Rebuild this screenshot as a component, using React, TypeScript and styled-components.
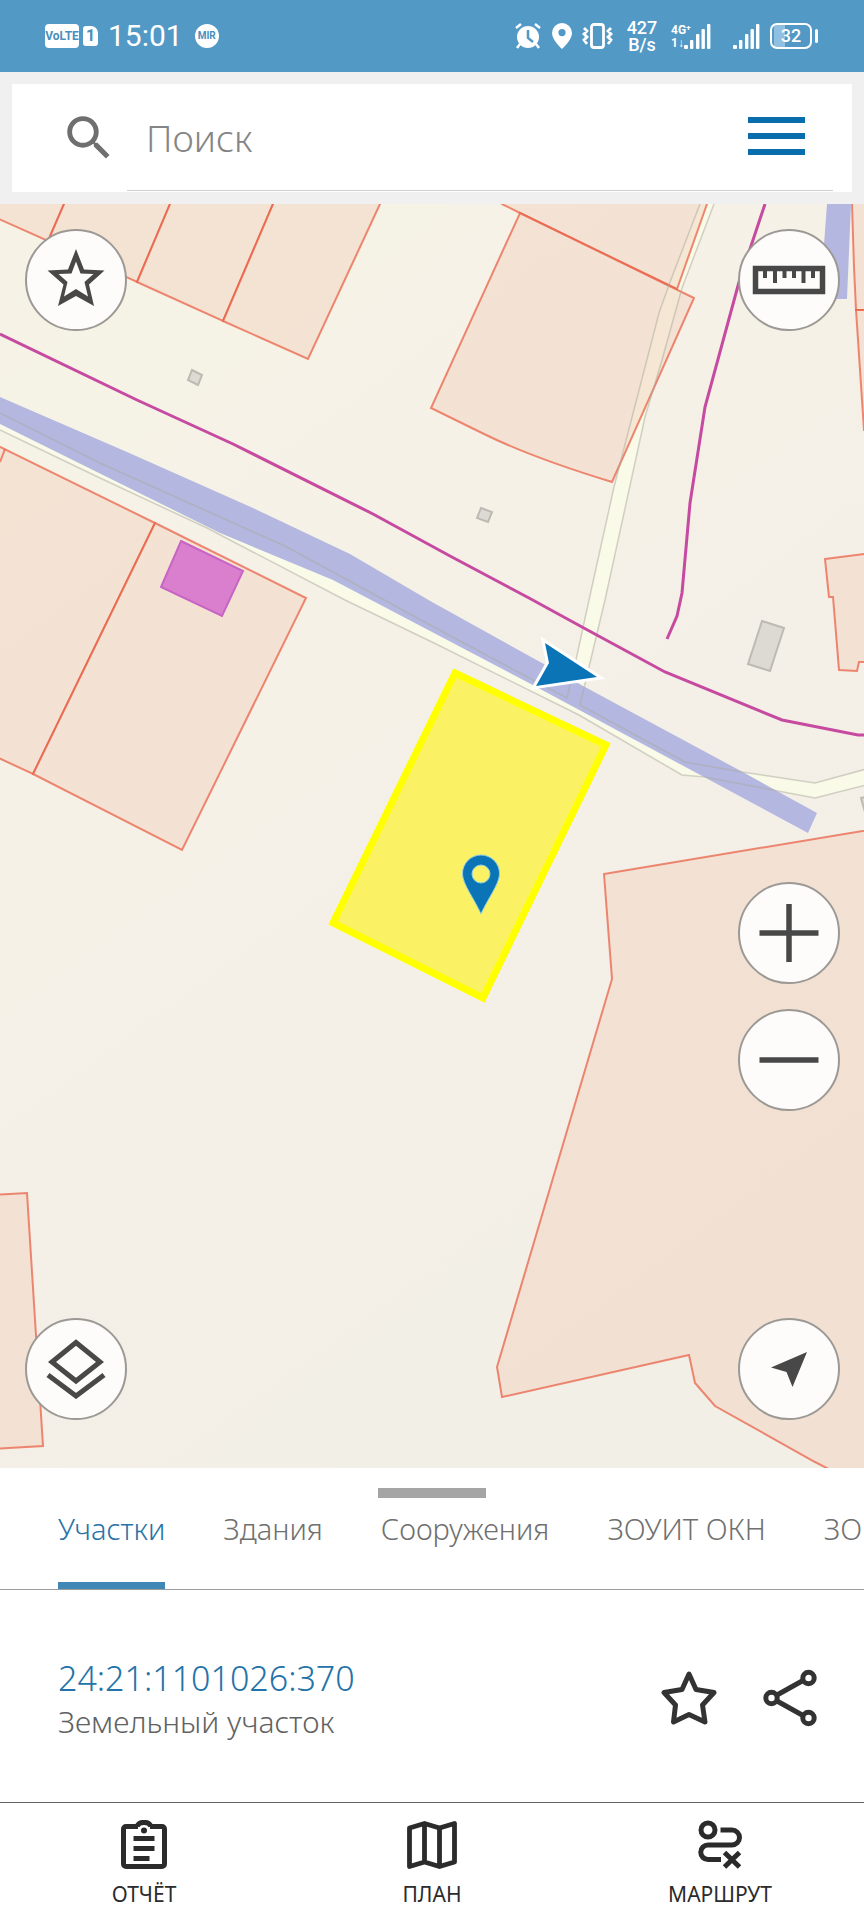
import React from 'react';
import styled, { createGlobalStyle, css } from 'styled-components';

const Global = createGlobalStyle`
  *, *::before, *::after { box-sizing: border-box; }
  body { margin: 0; background: #fff; font-family: "Noto Sans", "Open Sans", sans-serif; }
  button { font: inherit; color: inherit; background: none; border: 0; padding: 0; cursor: pointer; }
  svg { display: block; flex: none; }
`;

const Screen = styled.div`
  display: flex;
  flex-direction: column;
  min-height: 100vh;
  overflow: hidden;
`;

/* ---------- status bar ---------- */

const StatusBar = styled.header`
  display: flex;
  align-items: center;
  justify-content: space-between;
  height: 72px;
  padding: 0 46px 0 45px;
  background: #5299c6;
  color: #fff;
`;

const StatusGroup = styled.div<{ $gap: number }>`
  display: flex;
  align-items: center;
  gap: ${(p) => p.$gap}px;
`;

const Badge = styled.span<{ $width: number; $size: number; $round?: boolean }>`
  display: flex;
  align-items: center;
  justify-content: center;
  width: ${(p) => p.$width}px;
  height: 24px;
  border-radius: ${(p) => (p.$round ? '50%' : '4px')};
  background: #fff;
  color: #4a8fbd;
  font: 700 ${(p) => p.$size}px/24px Roboto, sans-serif;
`;

const SimBadge = styled(Badge)`
  height: 20px;
  border-radius: 3px 7px 3px 3px;
`;

const Clock = styled.time`
  margin: 0 8px 0 6px;
  font: 400 30px/40px Roboto, sans-serif;
`;

const Speed = styled.span`
  width: 34px;
  margin-left: 2px;
  font: 500 18px/17px Roboto, sans-serif;
  text-align: center;
`;

const Network = styled.div`
  display: flex;
  align-items: flex-end;
  margin: 0 12px 0 2px;
`;

const NetworkType = styled.span`
  display: flex;
  flex-direction: column;
  align-self: stretch;
  justify-content: space-between;
  width: 13px;
  font: 700 12px/12px Roboto, sans-serif;
  white-space: nowrap;
`;

const Battery = styled.span`
  display: flex;
  align-items: center;
  gap: 3px;

  &::after {
    content: '';
    width: 3px;
    height: 14px;
    border-radius: 2px;
    background: #fff;
  }
`;

const BatteryBody = styled.span`
  width: 42px;
  height: 26px;
  border: 2px solid #fff;
  border-radius: 7px;
  background: linear-gradient(90deg, transparent 2px, #8fc0e2 2px, #8fc0e2 13px, transparent 13px);
  font: 500 18px/22px Roboto, sans-serif;
  text-align: center;
`;

/* ---------- search ---------- */

const SearchArea = styled.form`
  padding: 12px;
  background: #f0f0f1;
`;

const SearchCard = styled.div`
  display: flex;
  align-items: center;
  gap: 9px;
  height: 108px;
  padding: 0 19px 1px 48px;
  background: #fff;
`;

const SearchField = styled.div`
  display: flex;
  flex: 1;
  align-items: center;
  align-self: stretch;
  min-width: 0;
  padding: 0 28px 0 19px;
  border-bottom: 1px solid #cfcfcf;
`;

const SearchInput = styled.input`
  flex: 1;
  min-width: 0;
  border: 0;
  outline: 0;
  padding: 2px 0 0;
  background: none;
  font: 300 37px/48px "Noto Sans", sans-serif;
  color: #444;

  &::placeholder { color: #858585; opacity: 1; }
`;

const MenuButton = styled.button`
  display: flex;
  flex-direction: column;
  gap: 10px;
  width: 57px;
  padding-bottom: 2px;

  span { height: 6px; background: #0a6dab; }
`;

/* ---------- map ---------- */

const MapArea = styled.main`
  position: relative;
  display: flex;
  flex: 1;
  justify-content: space-between;
  min-height: 800px;
  padding: 25px 24px 48px 25px;
  background: #f4f0e7;
  overflow: hidden;
`;

const MapDrawing = styled.svg`
  position: absolute;
  inset: 0;
  width: 100%;
  height: 100%;
`;

const ControlColumn = styled.div`
  position: relative;
  display: flex;
  flex-direction: column;
  justify-content: space-between;
`;

const ZoomGroup = styled.div`
  display: flex;
  flex-direction: column;
  gap: 25px;
  margin: auto 0 207px;
`;

const RoundButton = styled.button`
  display: flex;
  align-items: center;
  justify-content: center;
  width: 102px;
  height: 102px;
  border: 2px solid #9c9995;
  border-radius: 50%;
  background: #fdfcfb;
  color: #484848;
`;

/* ---------- sheet ---------- */

const Sheet = styled.section`
  padding-top: 20px;
  background: #fff;
`;

const Handle = styled.div`
  width: 108px;
  height: 10px;
  margin: 0 auto;
  background: #a5a5a5;
`;

const Tabs = styled.nav`
  display: flex;
  gap: 58px;
  height: 92px;
  padding-left: 58px;
  border-bottom: 1px solid #9c9c9c;
  overflow: hidden;
`;

const Tab = styled.button<{ $active?: boolean }>`
  flex: none;
  padding: 0 0 22px;
  border-bottom: 7px solid transparent;
  font-size: 29px;
  font-weight: 300;
  line-height: 40px;
  color: #707070;
  white-space: nowrap;

  ${(p) =>
    p.$active &&
    css`
      color: #2873a5;
      border-color: #4187b5;
    `}
`;

const ObjectRow = styled.article`
  display: flex;
  align-items: center;
  justify-content: space-between;
  height: 212px;
  padding: 0 47px 0 58px;
`;

const ObjectText = styled.div`
  display: flex;
  flex-direction: column;
  padding-top: 5px;
`;

const ObjectLink = styled.a`
  font-size: 34px;
  font-weight: 300;
  line-height: 46px;
  color: #2473a8;
  text-decoration: none;
`;

const ObjectKind = styled.span`
  font-size: 30px;
  font-weight: 300;
  line-height: 42px;
  color: #626262;
`;

const Actions = styled.div`
  display: flex;
  align-items: center;
  gap: 46px;
  padding-top: 4px;
  color: #333;
`;

const BottomBar = styled.nav`
  display: grid;
  grid-template-columns: repeat(3, 1fr);
  height: 118px;
  border-top: 1px solid #636363;
  background: #fff;
`;

const BottomItem = styled.button`
  display: flex;
  flex-direction: column;
  align-items: center;
  gap: 9px;
  padding-top: 17px;
  font-size: 21px;
  line-height: 30px;
  color: #2b2b2b;
`;

/* ---------- drawings ---------- */

const AlarmIcon = () => (
  <svg width="28" height="26" viewBox="0 0 28 26" fill="#fff">
    <circle cx="14" cy="14" r="11" />
    <path d="M2 5 7 1M26 5 21 1M6 21 3 25M22 21l3 4" stroke="#fff" strokeWidth="2.5" />
    <path d="M14 7v8l5 4" stroke="#5299c6" strokeWidth="2.5" fill="none" />
  </svg>
);

const PlaceIcon = () => (
  <svg width="20" height="26" viewBox="0 0 20 26">
    <path fillRule="evenodd" fill="#fff" d="M10 0a10 10 0 0 1 10 10c0 7-10 16-10 16S0 17 0 10A10 10 0 0 1 10 0Zm0 6a3.6 3.6 0 1 0 0 7.2a3.6 3.6 0 0 0 0-7.2Z" />
  </svg>
);

const VibrateIcon = () => (
  <svg width="31" height="26" viewBox="0 0 31 26" fill="none" stroke="#fff">
    <rect x="9.5" y="1.5" width="12" height="23" rx="2.5" strokeWidth="2.8" />
    <path d="M2 5l3 3-3 3 3 3-3 3 3 4M29 5l-3 3 3 3-3 3 3 3-3 4" strokeWidth="2.8" />
  </svg>
);

const SignalIcon = () => (
  <svg width="27" height="25" viewBox="0 0 27 25" fill="#fff">
    <rect x="0" y="21" width="4" height="4" rx="1" />
    <rect x="6" y="16" width="3.4" height="9" rx="1" />
    <rect x="12" y="10" width="3.4" height="15" rx="1" />
    <rect x="17.5" y="5" width="3.4" height="20" rx="1" />
    <rect x="23" y="0" width="3.4" height="25" rx="1" />
  </svg>
);

const SearchIcon = () => (
  <svg width="58" height="58" viewBox="0 0 24 24" fill="#6f6f6f" aria-hidden="true">
    <path d="M15.5 14h-.79l-.28-.27A6.471 6.471 0 0 0 16 9.5 6.5 6.5 0 1 0 9.5 16c1.61 0 3.09-.59 4.23-1.57l.27.28v.79l5 4.99L20.49 19l-4.99-5zm-6 0C7.01 14 5 11.99 5 9.5S7.01 5 9.5 5 14 7.01 14 9.5 11.99 14 9.5 14z" />
  </svg>
);

const SharpStarIcon = () => (
  <svg width="58" height="62" viewBox="0 0 58 62" fill="currentColor">
    <path
      fillRule="evenodd"
      d="M29 0 37 20.5 57.500 21.500 42 35.500 47 57 29 47 11 57 16.500 35.500 .5 21.500 21 20.500ZM29 12.500 24.500 24.500 11.500 25 20.500 33 17 47.500 29 40 41 47.500 37.500 33 46.500 25 33.500 24.500Z"
    />
  </svg>
);

const RulerIcon = () => (
  <svg width="74" height="30" viewBox="0 0 74 30" fill="none" stroke="currentColor">
    <rect x="3.5" y="3.5" width="67" height="23" strokeWidth="5.5" />
    <path d="M13 5v8M23 5v13M32.5 5v8M42 5v8M51.5 5v13M61 5v8" strokeWidth="4" />
  </svg>
);

const PlusIcon = () => (
  <svg width="60" height="60" viewBox="0 0 60 60" stroke="currentColor" strokeWidth="5.5">
    <path d="M.5 30h59M30 1v58" />
  </svg>
);

const MinusIcon = () => (
  <svg width="60" height="60" viewBox="0 0 60 60" stroke="currentColor" strokeWidth="5.5">
    <path d="M.5 30h59" />
  </svg>
);

const LayersIcon = () => (
  <svg width="60" height="60" viewBox="0 0 60 60" fill="none" stroke="currentColor" strokeWidth="5">
    <path d="M30 3.500 54 23 30 42 6 23Z" />
    <path d="M2 36 30 57 58 36" />
  </svg>
);

const LocateIcon = () => (
  <svg width="36" height="36" viewBox="0 0 36 36" fill="currentColor">
    <path d="M36 1 21.5 36 15.5 21 0 16.500Z" />
  </svg>
);

const StarIcon = () => (
  <svg width="56" height="54" viewBox="0 0 56 54" fill="none" stroke="currentColor" strokeWidth="5" strokeLinejoin="round">
    <path d="M28 3 35 18.5 53 21.5 41.5 34 44 51 28 43.5 12.500 51 14.500 34 3 21.500 21 18.500Z" />
  </svg>
);

const ShareIcon = () => (
  <svg width="54" height="58" viewBox="0 0 54 58" fill="none" stroke="currentColor" strokeWidth="5">
    <circle cx="8.500" cy="29" r="5.700" />
    <circle cx="45.500" cy="9" r="5.700" />
    <circle cx="45.500" cy="49" r="5.700" />
    <path d="M14 26 40 11.500M14 32 40 46.500" />
  </svg>
);

const ReportIcon = () => (
  <svg width="46" height="50" viewBox="0 0 46 50" fill="none" stroke="currentColor" strokeWidth="5">
    <path d="M17 6.500H5a2.500 2.500 0 0 0-2.500 2.500V44A2.500 2.500 0 0 0 5 46.500H41A2.500 2.500 0 0 0 43.500 44V9A2.500 2.500 0 0 0 41 6.500H29" />
    <path d="M16 6.500C18 1 28 1 30 6.500" />
    <circle cx="23" cy="10.500" r="3" fill="currentColor" stroke="none" />
    <path d="M12.500 18.500h21M12.500 28.500h21M12.500 38.500h16" />
  </svg>
);

const PlanIcon = () => (
  <svg width="50" height="50" viewBox="0 0 50 50" fill="none" stroke="currentColor" strokeWidth="4.800" strokeLinejoin="round">
    <path d="M2.500 8 17.500 3.500 32.500 8 47.500 3.500V42L32.500 46.500 17.500 42 2.500 46.500ZM17.500 3.500V42M32.500 8v38.500" />
  </svg>
);

const RouteIcon = () => (
  <svg width="44" height="50" viewBox="0 0 44 50" fill="none" stroke="currentColor" strokeWidth="5">
    <circle cx="10" cy="10" r="7" />
    <path d="M22.500 10H34a7.500 7.500 0 0 1 0 15H10a7 7 0 0 0 0 14.500H23" />
    <path d="M26.500 32.500 41.500 47M41.500 32.500 26.500 47" />
  </svg>
);

const parcels = [
  'M-10 215 48 241 64 204 80 150 -10 150Z',
  'M48 241 137 282 170 204 190 150H80L64 204Z',
  'M137 282 223 321 273 204 290 150H190L170 204Z',
  'M223 321 308 359 380 204 405 150H290L273 204Z',
  'M502 204 520 213 677 289 707 204 720 150H420Z',
  'M520 213 694 298 612 482Q530 457 482 433L431 408Z',
  'M852 150V204L854 267 856 310H880V150Z',
  'M856 310 864 430H880V310Z',
  'M825 559 880 552V662H859L857 671 839 670 833 597H829Z',
  'M-10 442 155 523 33 774 -10 754Z',
  'M155 523 306 598 182 850 33 774Z',
  'M604 874 880 828V1480H850L815 1462 715 1406 695 1383 689 1355 502 1397 497 1367 612 979Z',
  'M-10 1195 27 1193 43 1446 -10 1449Z',
];

const CadastralMap = () => (
  <MapDrawing viewBox="0 204 864 1264" preserveAspectRatio="xMidYMid slice" aria-label="Карта участков">
    <defs>
      <linearGradient id="land" x1="0" y1="0" x2="0.5" y2="1">
        <stop offset="0" stopColor="#f6f3e6" />
        <stop offset="0.6" stopColor="#f5f0e7" />
        <stop offset="1" stopColor="#f2efe6" />
      </linearGradient>
    </defs>
    <rect x="0" y="204" width="864" height="1264" fill="url(#land)" />
    {/* roads */}
    <path fill="#fafae8" d="M0 413 100 463 287 547 432 626 567 698 576 660 589 600 614 487 659 313 670 282 700 204H714L682 288 662 360 645 417 605 600 589 667 580 705 685 762 742 772 815 783 870 768V784L815 798 682 775 579 715 432 642 345 600 207 528 100 478 0 430Z" />
    {/* street band */}
    <path fill="#b4b8e1" d="M0 397 127 452 253 508 350 554 432 602 542 663 585 687 739 770 817 813 808 833 704 777 529 683 432 632 333 580 220 533 0 424Z" />
    <path fill="#b4b8e1" d="M827 204H851L847 299H820Z" />
    {/* buildings */}
    <g fill="#dcdad3" stroke="#bdbab4" strokeWidth="2">
      <path d="M762 621 784 628 770 671 748 664Z" />
      <path d="M192 370 202 375 198 385 188 380Z" />
      <path d="M481 508 492 512 488 522 477 518Z" />
      <path d="M861 798 870 796V830Z" />
    </g>
    <g fill="#f2d3bf" fillOpacity="0.5" stroke="#ea5a40" strokeOpacity="0.7" strokeWidth="2">
      {parcels.map((d) => (
        <path key={d} d={d} />
      ))}
      <path d="M5 449 0 462" fill="none" />
    </g>
    {/* road outlines */}
    <g fill="none" stroke="#a9aa9d" strokeOpacity="0.5" strokeWidth="1.5">
      <path d="M0 413 100 463 287 547 432 626 567 698 576 660 589 600 614 487 659 313 670 282 700 204" />
      <path d="M714 204 682 288 662 360 645 417 605 600 589 667 580 705 685 762 742 772 815 783 870 768" />
      <path d="M0 430 100 478 207 528 345 600 432 642 579 715 682 775 704 777 815 798 870 784" />
    </g>
    <path d="M181 541 243 571 222 616 161 587Z" fill="#d97fcd" stroke="#c764c4" strokeWidth="2" />
    <g fill="none" stroke="#c54aa0" strokeWidth="3">
      <path d="M0 334 137 400 233 444 373 514 450 556 529 598 582 627 665 672 782 720 858 735H870" />
      <path d="M765 204 739 282 705 407 690 503 682 593 677 616 667 639" />
    </g>
    {/* selected parcel */}
    <path d="M455 673 606 745 483 998 333 923Z" fill="#faf165" stroke="#ff0" strokeWidth="7" />
    <path d="M545 643 597 677 536 686 549 663Z" fill="#0a74b6" stroke="#fff" strokeWidth="6" paintOrder="stroke" />
    <path fillRule="evenodd" fill="#0a74b6" stroke="#8fd0e8" d="M481 855A18.5 18.5 0 0 1 499.5 874C499.5 884 487 900 481 914 475 900 462.5 884 462.5 874A18.5 18.5 0 0 1 481 855ZM481 865A9 9 0 1 0 481 883 9 9 0 0 0 481 865Z" />
  </MapDrawing>
);

export default function App() {
  return (
    <Screen>
      <Global />
      <StatusBar>
        <StatusGroup $gap={4}>
          <Badge $width={34} $size={12}>VoLTE</Badge>
          <SimBadge $width={15} $size={16}>1</SimBadge>
          <Clock>15:01</Clock>
          <Badge $width={24} $size={10} $round>MIR</Badge>
        </StatusGroup>
        <StatusGroup $gap={10}>
          <AlarmIcon />
          <PlaceIcon />
          <VibrateIcon />
          <Speed>427 B/s</Speed>
          <Network>
            <NetworkType>
              <span>4G⁺</span>
              <span>1↓</span>
            </NetworkType>
            <SignalIcon />
          </Network>
          <SignalIcon />
          <Battery>
            <BatteryBody>32</BatteryBody>
          </Battery>
        </StatusGroup>
      </StatusBar>

      <SearchArea role="search" onSubmit={(e) => e.preventDefault()}>
        <SearchCard>
          <SearchIcon />
          <SearchField>
            <SearchInput type="text" placeholder="Поиск" aria-label="Поиск" />
            <MenuButton type="button" aria-label="Меню">
              <span />
              <span />
              <span />
            </MenuButton>
          </SearchField>
        </SearchCard>
      </SearchArea>

      <MapArea>
        <CadastralMap />
        <ControlColumn>
          <RoundButton aria-label="Избранное"><SharpStarIcon /></RoundButton>
          <RoundButton aria-label="Слои"><LayersIcon /></RoundButton>
        </ControlColumn>
        <ControlColumn>
          <RoundButton aria-label="Линейка"><RulerIcon /></RoundButton>
          <ZoomGroup>
            <RoundButton aria-label="Приблизить"><PlusIcon /></RoundButton>
            <RoundButton aria-label="Отдалить"><MinusIcon /></RoundButton>
          </ZoomGroup>
          <RoundButton aria-label="Моё местоположение"><LocateIcon /></RoundButton>
        </ControlColumn>
      </MapArea>

      <Sheet>
        <Handle />
        <Tabs>
          <Tab $active>Участки</Tab>
          <Tab>Здания</Tab>
          <Tab>Сооружения</Tab>
          <Tab>ЗОУИТ ОКН</Tab>
          <Tab>ЗО</Tab>
        </Tabs>
        <ObjectRow>
          <ObjectText>
            <ObjectLink href="#object">24:21:1101026:370</ObjectLink>
            <ObjectKind>Земельный участок</ObjectKind>
          </ObjectText>
          <Actions>
            <button aria-label="В избранное"><StarIcon /></button>
            <button aria-label="Поделиться"><ShareIcon /></button>
          </Actions>
        </ObjectRow>
      </Sheet>

      <BottomBar>
        <BottomItem><ReportIcon />ОТЧЁТ</BottomItem>
        <BottomItem><PlanIcon />ПЛАН</BottomItem>
        <BottomItem><RouteIcon />МАРШРУТ</BottomItem>
      </BottomBar>
    </Screen>
  );
}
